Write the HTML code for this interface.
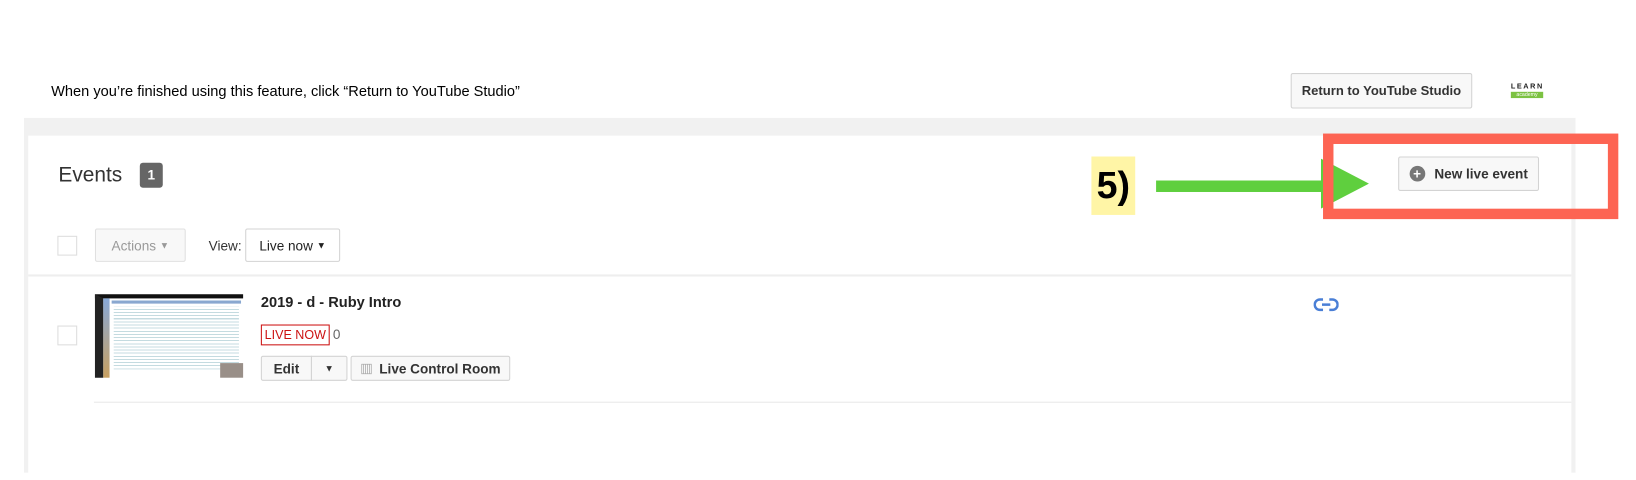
<!DOCTYPE html>
<html><head><style>
*{margin:0;padding:0;box-sizing:border-box}
body{width:1636px;height:438px;background:#fff;font-family:"Liberation Sans",Arial,sans-serif;overflow:hidden;color:#222}
#w{position:relative;width:1568px;height:420px;transform:scale(1.0434);transform-origin:0 0}
.a{position:absolute}
.btn{position:absolute;background:#f8f8f8;border:1px solid #d3d3d3;border-radius:2px;font-size:13px;font-weight:bold;color:#333;display:flex;align-items:center;justify-content:center}
</style></head><body><div id="w">
<div class="a" style="left:49px;top:79px;font-size:14px;color:#000">When you’re finished using this feature, click “Return to YouTube Studio”</div>
<div class="btn" style="left:1237px;top:70px;width:174px;height:34px;font-weight:bold;font-size:12.5px;color:#333">Return to YouTube Studio</div>
<div class="a" style="left:1448px;top:80px;font-size:7px;font-weight:bold;letter-spacing:1.5px;color:#222">LEARN</div>
<div class="a" style="left:1448px;top:88px;width:31px;height:6px;background:#7cc242;font-size:5px;color:#fff;text-align:center;line-height:6px">academy</div>

<div class="a" style="left:23px;top:113px;width:1487px;height:340px;background:#f1f1f1"></div>
<div class="a" style="left:27px;top:130px;width:1479px;height:330px;background:#fff"></div>

<div class="a" style="left:56px;top:157px;font-size:20px;color:#333">Events</div>
<div class="a" style="left:134px;top:156px;width:22px;height:24px;background:#666;border-radius:3px;color:#fff;font-size:13px;font-weight:bold;text-align:center;line-height:24px">1</div>

<div class="a" style="left:55px;top:226px;width:19px;height:19px;border:1px solid #ddd;background:#fff"></div>
<div class="btn" style="left:91px;top:219px;width:87px;height:32px;color:#999;font-weight:normal;background:#f8f8f8;border-color:#e0e0e0">Actions&nbsp;<span style="font-size:9px">▼</span></div>
<div class="a" style="left:200px;top:228px;font-size:13px;color:#333">View:</div>
<div class="btn" style="left:235px;top:219px;width:91px;height:32px;font-weight:normal;color:#222;background:#fff">Live now&nbsp;<span style="font-size:9px">▼</span></div>

<div class="a" style="left:27px;top:263px;width:1479px;height:2px;background:#eee"></div>

<div class="a" style="left:55px;top:312px;width:19px;height:19px;border:1px solid #ddd"></div>
<div class="a" style="left:91px;top:282px;width:142px;height:80px;background:#fff;border-top:4px solid #111;border-left:8px solid #222">
 <div class="a" style="left:0;top:0;width:6px;height:76px;background:linear-gradient(#88a9d8,#c8a060)"></div>
 <div class="a" style="left:8px;top:2px;width:124px;height:3px;background:#8aa8d0"></div>
 <div class="a" style="left:10px;top:8px;width:120px;height:60px;background:repeating-linear-gradient(#fff 0 2px,#c4dbe0 2px 3px)"></div>
 <div class="a" style="left:112px;top:62px;width:22px;height:14px;background:#998f88"></div>
</div>
<div class="a" style="left:250px;top:281px;font-size:14px;color:#222;font-weight:bold">2019 - d - Ruby Intro</div>
<div class="a" style="left:250px;top:311px;width:66px;height:20px;border:1px solid #cc1111;color:#cc1111;font-size:12px;text-align:center;line-height:18px">LIVE NOW</div>
<div class="a" style="left:319px;top:313px;font-size:13px;color:#666">0</div>
<div class="btn" style="left:250px;top:341px;width:49px;height:24px;border-radius:2px 0 0 2px">Edit</div>
<div class="btn" style="left:298px;top:341px;width:35px;height:24px;border-radius:0 2px 2px 0;font-size:9px">▼</div>
<div class="btn" style="left:336px;top:341px;width:153px;height:24px"><span style="color:#aaa;font-weight:normal;margin-right:6px">▥</span>Live Control Room</div>

<svg class="a" style="left:1259px;top:285px" width="24" height="14" viewBox="0 0 24 14"><path d="M9 2H6a5 5 0 0 0 0 10h3M15 2h3a5 5 0 0 1 0 10h-3M8 7h8" fill="none" stroke="#4a7fd6" stroke-width="2.4"/></svg>

<div class="a" style="left:90px;top:385px;width:1416px;height:1px;background:#e8e8e8"></div>

<div class="a" style="left:1046px;top:150px;width:42px;height:56px;background:#fff5a6;font-size:36px;font-weight:bold;color:#000;line-height:56px;text-align:center">5)</div>
<div class="a" style="left:1108px;top:173px;width:164px;height:11px;background:#5fcf3e"></div>
<svg class="a" style="left:1266px;top:152px" width="46" height="48"><polygon points="0,0 46,24 0,48" fill="#5fcf3e"/></svg>

<div class="btn" style="left:1340px;top:150px;width:135px;height:33px"><span style="display:inline-block;width:15px;height:15px;border-radius:50%;background:#777;color:#fff;font-size:13px;line-height:15px;text-align:center;margin-right:9px">+</span>New live event</div>
<div class="a" style="left:1268px;top:128px;width:283px;height:82px;border:10px solid #fd6453"></div>
</div></body></html>
